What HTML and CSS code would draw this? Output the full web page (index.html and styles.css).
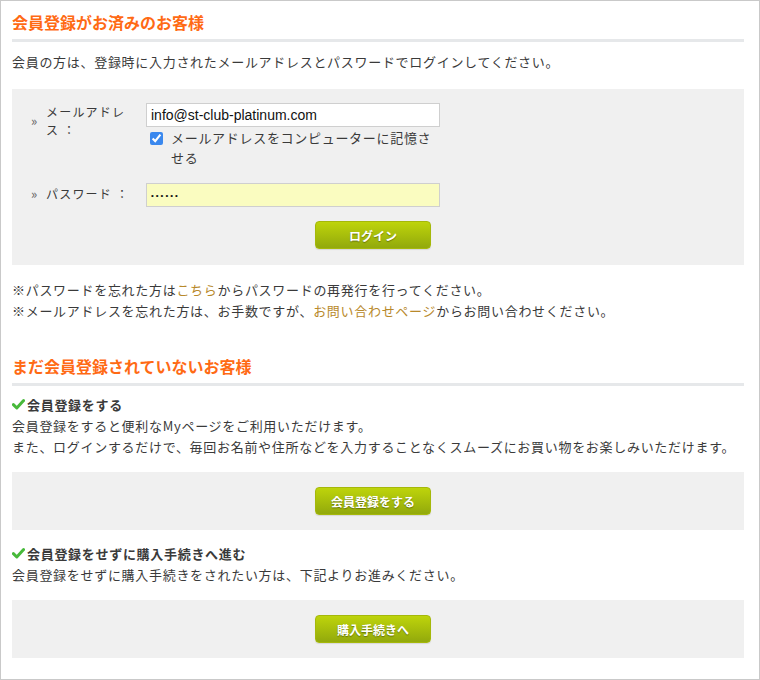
FILE: index.html
```html
<!DOCTYPE html>
<html lang="ja">
<head>
    <meta charset="UTF-8">
    <meta name="viewport" content="width=device-width, initial-scale=1.0">
    <title>ログイン</title>
    <link rel="stylesheet" href="styles.css">
</head>
<body>
    <div class="page">
        <h2 class="section-title">会員登録がお済みのお客様</h2>
        <p class="lead">会員の方は、登録時に入力されたメールアドレスとパスワードでログインしてください。</p>

        <div class="login-box">
            <div class="form-row">
                <div class="label"><span class="mark">&raquo;</span><span class="label-text">メールアドレス ：</span></div>
                <div class="field">
                    <input type="text" class="text-input" value="info@st-club-platinum.com">
                    <label class="remember"><input type="checkbox" checked><span>メールアドレスをコンピューターに記憶させる</span></label>
                </div>
            </div>
            <div class="form-row last">
                <div class="label single"><span class="mark">&raquo;</span><span class="label-text">パスワード ：</span></div>
                <div class="field">
                    <input type="password" class="text-input password" value="123456">
                </div>
            </div>
            <div class="button-row">
                <button class="green-button">ログイン</button>
            </div>
        </div>

        <p class="notes">※パスワードを忘れた方は<a href="#">こちら</a>からパスワードの再発行を行ってください。<br>
        ※メールアドレスを忘れた方は、お手数ですが、<a href="#">お問い合わせページ</a>からお問い合わせください。</p>

        <h2 class="section-title second">まだ会員登録されていないお客様</h2>

        <div class="option">
            <h3 class="option-title"><svg class="check" width="13" height="11" viewBox="0 0 13 11"><path d="M1.4 5.6 L4.8 9 L11.6 1.6" fill="none" stroke="#47b93a" stroke-width="3" stroke-linecap="round" stroke-linejoin="round"/></svg>会員登録をする</h3>
            <p>会員登録をすると便利なMyページをご利用いただけます。<br>
            また、ログインするだけで、毎回お名前や住所などを入力することなくスムーズにお買い物をお楽しみいただけます。</p>
        </div>
        <div class="action-box">
            <button class="green-button">会員登録をする</button>
        </div>

        <div class="option">
            <h3 class="option-title"><svg class="check" width="13" height="11" viewBox="0 0 13 11"><path d="M1.4 5.6 L4.8 9 L11.6 1.6" fill="none" stroke="#47b93a" stroke-width="3" stroke-linecap="round" stroke-linejoin="round"/></svg>会員登録をせずに購入手続きへ進む</h3>
            <p>会員登録をせずに購入手続きをされたい方は、下記よりお進みください。</p>
        </div>
        <div class="action-box">
            <button class="green-button">購入手続きへ</button>
        </div>
    </div>
</body>
</html>
```

FILE: styles.css
```css
body {
    margin: 0;
    font-family: "Noto Sans CJK JP", "Liberation Sans", sans-serif;
    color: #3a3a3a;
    background: #fff;
}
.page {
    box-sizing: border-box;
    width: 760px;
    height: 680px;
    border: 1px solid #c9c9c9;
    padding: 11px 15px 0 11px;
}
.section-title {
    margin: 0;
    font-size: 16px;
    line-height: 20px;
    font-weight: bold;
    color: #ff6a14;
    padding-bottom: 7px;
    border-bottom: 3px solid #e6e8ea;
}
.section-title.second {
    margin-top: 35px;
}
.lead {
    margin: 9px 0 0;
    font-size: 13px;
    line-height: 21px;
    letter-spacing: 0.7px;
}
.login-box {
    margin-top: 17px;
    background: #f0f0f0;
    padding: 14px 0 16px 19px;
}
.form-row {
    display: flex;
    align-items: flex-start;
    margin-bottom: 15px;
}
.form-row.last {
    margin-bottom: 14px;
}
.label {
    display: flex;
    align-items: center;
    width: 115px;
    font-size: 12px;
    line-height: 18px;
    letter-spacing: 1.2px;
}
.label.single {
    margin-top: 2px;
}
.mark {
    width: 15px;
    font-size: 13px;
    color: #666;
    letter-spacing: 0;
}
.label-text {
    width: 86px;
}
.field {
    width: 294px;
}
.text-input {
    display: block;
    box-sizing: border-box;
    width: 294px;
    height: 24px;
    margin: 0;
    border: 1px solid #cfcfcf;
    padding: 0 4px;
    font-family: "Liberation Sans", sans-serif;
    font-size: 14px;
    color: #111;
    background: #fff;
    outline: none;
}
.text-input.password {
    background: #fafcc0;
    letter-spacing: 2px;
    font-size: 8px;
}
.remember {
    display: flex;
    align-items: flex-start;
    margin-top: 1px;
    font-size: 13px;
    line-height: 20px;
    letter-spacing: 0.7px;
}
.remember input {
    margin: 4px 8px 0 4px;
    width: 13px;
    height: 13px;
    accent-color: #3a88ee;
}
.button-row {
    padding-left: 284px;
}
.green-button {
    display: block;
    box-sizing: border-box;
    width: 116px;
    height: 28px;
    border: 1px solid #a5b80a;
    border-radius: 4px;
    background: linear-gradient(#bed40b, #92a90c);
    color: #fff;
    font-family: "Noto Sans CJK JP", sans-serif;
    font-size: 12px;
    font-weight: bold;
    text-shadow: 0 1px 1px rgba(0, 0, 0, 0.35);
    box-shadow: 0 1px 1px rgba(0, 0, 0, 0.1);
    cursor: pointer;
}
.notes {
    margin: 14px 0 0;
    font-size: 13px;
    line-height: 21px;
    letter-spacing: 0.7px;
}
.notes a {
    color: #b8892b;
    text-decoration: none;
}
.option {
    margin-top: 8px;
    font-size: 13px;
    line-height: 21px;
    letter-spacing: 0.7px;
}
.option-title {
    margin: 0;
    font-size: 13px;
    font-weight: bold;
    display: flex;
    align-items: center;
}
.check {
    margin-right: 2px;
}
.option p {
    margin: 0;
}
.action-box {
    margin: 15px 0 13px;
    background: #f0f0f0;
    height: 58px;
    display: flex;
    align-items: center;
    justify-content: center;
    padding-right: 10px;
}
```
